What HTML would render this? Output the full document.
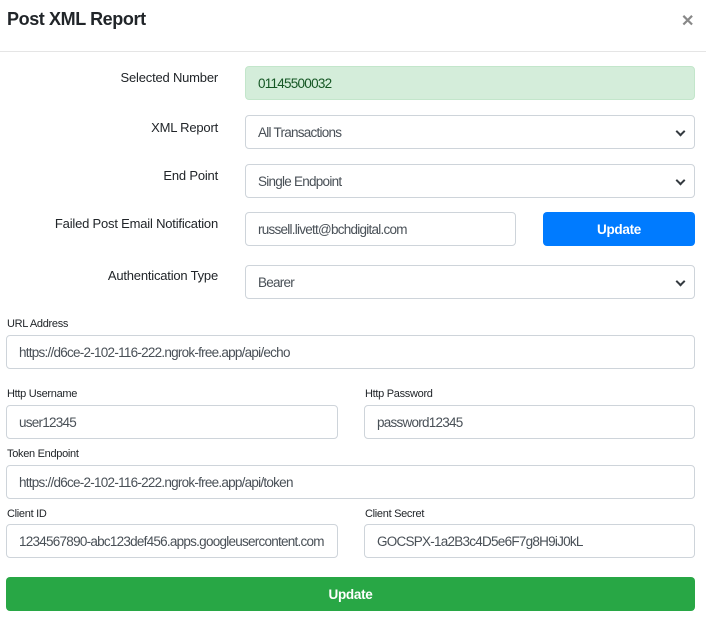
<!DOCTYPE html>
<html><head><meta charset="utf-8"><style>
*{box-sizing:border-box;margin:0;padding:0}
body{width:706px;height:625px;background:#fff;font-family:"Liberation Sans",Arial,sans-serif;color:#212529;position:relative;overflow:hidden}
.a{position:absolute}
.t{left:7px;top:9px;font-size:18px;font-weight:bold;letter-spacing:-0.4px}
.x{left:681px;top:11px;font-size:16px;color:#888;font-weight:bold}
.hr{left:0;top:51px;width:706px;height:1px;background:#e5e5e5}
.lbl{font-size:13px;letter-spacing:-0.2px;text-align:right;width:210px;left:8px}
.sl{font-size:11px;letter-spacing:-0.3px;color:#212529}
.in{border:1px solid #ced4da;border-radius:4px;height:34px;font-size:13.5px;letter-spacing:-0.75px;color:#495057;padding:1px 12px 0;line-height:32px;white-space:nowrap;overflow:hidden;background:#fff}
.sel::after{content:"";position:absolute;right:10px;top:12px;width:5px;height:5px;border-right:2px solid #343a40;border-bottom:2px solid #343a40;transform:rotate(45deg)}
.btn{border-radius:4px;color:#fff;font-size:13.5px;font-weight:bold;text-align:center;line-height:35px;height:34px;letter-spacing:-0.3px}
</style></head><body>
<div class="a t">Post XML Report</div>
<div class="a x">✕</div>
<div class="a hr"></div>

<div class="a lbl" style="top:70px">Selected Number</div>
<div class="a in" style="left:245px;top:66px;width:450px;background:#d4edda;border-color:#c3e6cb;color:#155724">01145500032</div>

<div class="a lbl" style="top:120px">XML Report</div>
<div class="a in sel" style="left:245px;top:115px;width:450px">All Transactions</div>

<div class="a lbl" style="top:168px">End Point</div>
<div class="a in sel" style="left:245px;top:164px;width:450px">Single Endpoint</div>

<div class="a lbl" style="top:216px">Failed Post Email Notification</div>
<div class="a in" style="left:245px;top:212px;width:271px">russell.livett@bchdigital.com</div>
<div class="a btn" style="left:543px;top:212px;width:152px;background:#007bff">Update</div>

<div class="a lbl" style="top:268px">Authentication Type</div>
<div class="a in sel" style="left:245px;top:265px;width:450px">Bearer</div>

<div class="a sl" style="left:7px;top:318px">URL Address</div>
<div class="a in" style="left:6px;top:335px;width:689px">https://d6ce-2-102-116-222.ngrok-free.app/api/echo</div>

<div class="a sl" style="left:7px;top:388px">Http Username</div>
<div class="a sl" style="left:365px;top:388px">Http Password</div>
<div class="a in" style="left:6px;top:405px;width:332px">user12345</div>
<div class="a in" style="left:364px;top:405px;width:331px">password12345</div>

<div class="a sl" style="left:7px;top:448px">Token Endpoint</div>
<div class="a in" style="left:6px;top:465px;width:689px">https://d6ce-2-102-116-222.ngrok-free.app/api/token</div>

<div class="a sl" style="left:7px;top:508px">Client ID</div>
<div class="a sl" style="left:365px;top:508px">Client Secret</div>
<div class="a in" style="left:6px;top:524px;width:332px">1234567890-abc123def456.apps.googleusercontent.com</div>
<div class="a in" style="left:364px;top:524px;width:331px">GOCSPX-1a2B3c4D5e6F7g8H9iJ0kL</div>

<div class="a btn" style="left:6px;top:577px;width:689px;background:#28a745">Update</div>
</body></html>
